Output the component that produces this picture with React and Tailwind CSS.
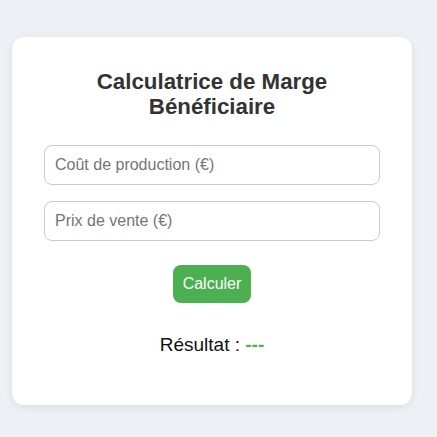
import React, { useState } from "react";

export default function App() {
  const [cost, setCost] = useState("");
  const [price, setPrice] = useState("");
  const [result, setResult] = useState("---");

  const calculate = () => {
    const c = parseFloat(cost);
    const p = parseFloat(price);
    if (isNaN(c) || isNaN(p) || p === 0) {
      setResult("---");
      return;
    }
    setResult((((p - c) / p) * 100).toFixed(2) + " %");
  };

  return (
    <div
      className="min-h-[437px] bg-[#edf0f4] pt-[37px] px-[12px]"
      style={{ fontFamily: '"Liberation Sans", Arial, sans-serif' }}
    >
      <div className="w-[400px] bg-white rounded-[12px] shadow-[0_2px_10px_rgba(0,0,0,0.08)] px-[32px] pt-[32px] pb-[49px]">
        <h2 className="text-center font-bold text-[22.3px] leading-[25px] text-[#333]">
          Calculatrice de Marge Bénéficiaire
        </h2>
        <div className="mt-[26px] flex flex-col gap-[16px]">
          <input
            type="number"
            value={cost}
            onChange={(e) => setCost(e.target.value)}
            placeholder="Coût de production (€)"
            className="w-full h-[40px] px-[10px] text-[16px] border border-[#ccc] rounded-[8px] placeholder:text-[#757575] outline-none"
          />
          <input
            type="number"
            value={price}
            onChange={(e) => setPrice(e.target.value)}
            placeholder="Prix de vente (€)"
            className="w-full h-[40px] px-[10px] text-[16px] border border-[#ccc] rounded-[8px] placeholder:text-[#757575] outline-none"
          />
        </div>
        <div className="mt-[24px] flex justify-center">
          <button
            onClick={calculate}
            className="bg-[#4caf50] text-white text-[16px] leading-[18px] px-[10px] py-[10px] rounded-[8px]"
          >
            Calculer
          </button>
        </div>
        <p className="mt-[31px] text-center text-[19px] leading-[22px] text-[#111]">
          Résultat : <span className="font-bold text-[#4caf50]">{result}</span>
        </p>
      </div>
    </div>
  );
}
